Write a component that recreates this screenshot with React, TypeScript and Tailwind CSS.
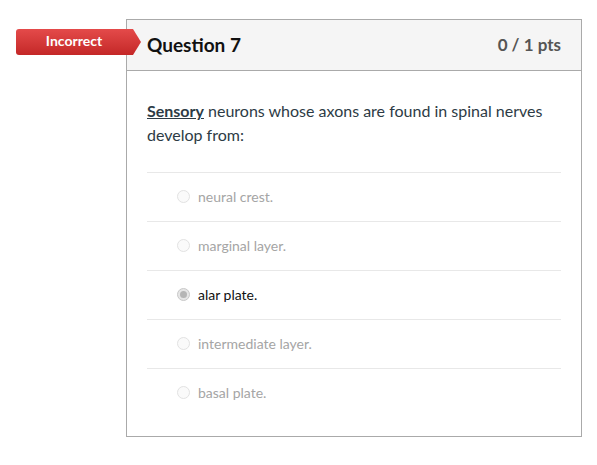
import React from 'react'

const answers = [
    { label: 'neural crest.', picked: false },
    { label: 'marginal layer.', picked: false },
    { label: 'alar plate.', picked: true },
    { label: 'intermediate layer.', picked: false },
    { label: 'basal plate.', picked: false },
]

const Radio = ({ picked }: { picked: boolean }) =>
    picked ? (
        <span className="flex h-[13px] w-[13px] items-center justify-center rounded-full border border-[#c8c8c8] bg-[#e6e6e6]">
            <span className="h-[7px] w-[7px] rounded-full bg-[#b5b5b5]" />
        </span>
    ) : (
        <span className="h-[13px] w-[13px] rounded-full border border-[#e2e2e2] bg-[#fafafa]" />
    )

const App = () => {
    return (
        <div className="relative h-[465px] w-[597px] bg-white font-['Lato','Open_Sans',sans-serif]">
            {/* incorrect badge */}
            <div className="absolute left-[16px] top-[29px] flex h-[26px]">
                <div className="flex w-[116px] items-center justify-center rounded-l-[3px] bg-gradient-to-b from-[#e44a4a] to-[#c42727] pb-[3px] text-[14px] font-bold text-white">
                    Incorrect
                </div>
                <svg width="9" height="26" viewBox="0 0 9 26" className="block">
                    <defs>
                        <linearGradient id="rg" x1="0" y1="0" x2="0" y2="1">
                            <stop offset="0" stopColor="#e44a4a" />
                            <stop offset="1" stopColor="#c42727" />
                        </linearGradient>
                    </defs>
                    <polygon points="0,0 1,0 9,13 1,26 0,26" fill="url(#rg)" />
                </svg>
            </div>

            <div className="ml-[126px] pt-[19px]">
                <div className="w-[456px] border border-[#aaaaaa]">
                    <div className="flex h-[51px] items-center justify-between border-b border-[#aaaaaa] bg-[#f5f5f5] px-[20px]">
                        <h2 className="text-[19px] font-bold text-[#111]">Question 7</h2>
                        <span className="text-[17px] font-bold text-[#555]">0 / 1 pts</span>
                    </div>
                    <div className="px-[20px] pb-[19px] pt-[28px]">
                        <p className="text-[16px] leading-[24px] text-[#2d3b45]">
                            <span className="font-bold underline">Sensory</span> neurons whose axons are found in spinal nerves develop from:
                        </p>
                        <div className="mt-[25px]">
                            {answers.map((a) => (
                                <div
                                    key={a.label}
                                    className="flex h-[49px] items-center gap-[8px] border-t border-[#e8e8e8] pb-[2px] pl-[30px]"
                                >
                                    <Radio picked={a.picked} />
                                    <span className={a.picked ? 'text-[14px] text-[#111]' : 'text-[14px] text-[#a5a5a5]'}>
                                        {a.label}
                                    </span>
                                </div>
                            ))}
                        </div>
                    </div>
                </div>
            </div>
        </div>
    )
}

export default App
